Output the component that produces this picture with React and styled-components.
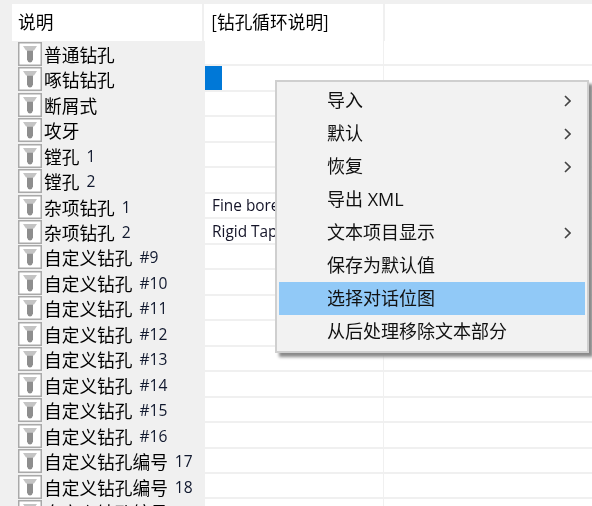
import React from 'react';
import styled, { createGlobalStyle } from 'styled-components';

const GlobalStyle = createGlobalStyle`
  html, body {
    margin: 0;
    padding: 0;
    width: 592px;
    height: 506px;
    overflow: hidden;
    background: #f0f0f0;
  }
`;

/* Table */
const Page = styled.div`
  position: relative;
  width: 592px;
  height: 506px;
  overflow: hidden;
  box-sizing: border-box;
  padding: 4px 0 0 12px;
  background: #f0f0f0;
  color: #000;
  font-family: 'Noto Sans CJK SC', 'Noto Sans', sans-serif;
  font-size: 17.7px;
  filter: blur(0.3px);
`;

const Grid = styled.div`
  display: grid;
  grid-template-columns: 193px 178px 1fr;
  background: #fff;
`;

const HeaderCell = styled.div`
  height: 37px;
  box-sizing: border-box;
  display: flex;
  align-items: center;
  padding-left: ${p => p.$pad}px;
  padding-bottom: 3px;
  margin-left: ${p => p.$shift || 0}px;
  background: #fff;
  border-left: ${p => (p.$divider ? '2px solid #f0f0f0' : 'none')};
  white-space: nowrap;
  overflow: hidden;
`;

const NameCell = styled.div`
  height: 25.47px;
  box-sizing: border-box;
  display: flex;
  align-items: center;
  padding-left: 6px;
  gap: 2px;
  background: #f0f0f0;
  white-space: nowrap;
`;

const ValueCell = styled.div`
  height: 25.47px;
  box-sizing: border-box;
  display: flex;
  align-items: center;
  padding-left: 7px;
  background: #fff;
  border-bottom: 2px solid #f0f0f0;
  border-left: ${p => (p.$divider ? '1px solid #f0f0f0' : 'none')};
  font-size: 15.4px;
  font-family: 'Open Sans', 'Noto Sans', sans-serif;
  color: #141428;
  white-space: nowrap;
  overflow: hidden;
`;

const SelectMark = styled.div`
  width: 17px;
  height: 24px;
  margin-left: -7px;
  background: #0078d7;
`;

const IconBox = styled.svg`
  flex: none;
  width: 24px;
  height: 24px;
`;

const Num = styled.span`
  font-family: 'Open Sans', 'Noto Sans', sans-serif;
  font-size: 15.6px;
  margin-left: 5px;
  color: #10182e;
`;

/* Context menu */
const Menu = styled.div`
  position: absolute;
  left: 275px;
  top: 80px;
  width: 314px;
  height: 273px;
  box-sizing: border-box;
  padding: 2px;
  background: #f2f2f2;
  border: 2px solid #cfcfcf;
  box-shadow: 4px 4px 3px #8a8a8a;
  color: #111;
  font-family: 'Open Sans', 'Noto Sans CJK SC', sans-serif;
  font-size: 18px;
`;

const MenuItem = styled.div`
  height: 33px;
  box-sizing: border-box;
  display: flex;
  align-items: center;
  justify-content: space-between;
  padding: 0 14px 0 48px;
  background: ${p => (p.$active ? '#91c9f7' : 'transparent')};
  white-space: nowrap;
`;

const MenuLabel = styled.span`
  padding-bottom: 3px;
`;

const Arrow = styled.svg`
  width: 7px;
  height: 12px;
`;

const DrillIcon = () => (
  <IconBox viewBox="0 0 24 24">
    <rect x="0.75" y="0.75" width="22.5" height="22.5" fill="#fff" stroke="#a9a9a9" strokeWidth="1.5" />
    <path d="M5 4h14l-3 4.500H8z" fill="#c4c4c4" />
    <path d="M9 8.500h6v9q-0.500 2.500-3 3q-2.500-0.500-3-3z" fill="#8e8e8e" />
  </IconBox>
);

const SubArrow = () => (
  <Arrow viewBox="0 0 7 12">
    <path d="M1 1l5 5l-5 5" fill="none" stroke="#444" strokeWidth="1.600" />
  </Arrow>
);

const rows = [
  ['普通钻孔'],
  ['啄钻钻孔'],
  ['断屑式'],
  ['攻牙'],
  ['镗孔', '1'],
  ['镗孔', '2'],
  ['杂项钻孔', '1'],
  ['杂项钻孔', '2'],
  ['自定义钻孔', '#9'],
  ['自定义钻孔', '#10'],
  ['自定义钻孔', '#11'],
  ['自定义钻孔', '#12'],
  ['自定义钻孔', '#13'],
  ['自定义钻孔', '#14'],
  ['自定义钻孔', '#15'],
  ['自定义钻孔', '#16'],
  ['自定义钻孔编号', '17'],
  ['自定义钻孔编号', '18'],
  ['自定义钻孔编号', '19']
];

const values = { 6: 'Fine bore', 7: 'Rigid Tap' };

const menuItems = [
  { label: '导入', sub: true },
  { label: '默认', sub: true },
  { label: '恢复', sub: true },
  { label: '导出 XML' },
  { label: '文本项目显示', sub: true },
  { label: '保存为默认值' },
  { label: '选择对话位图', active: true },
  { label: '从后处理移除文本部分' }
];

const App = () => (
  <Page>
    <GlobalStyle />
    <Grid>
      <HeaderCell $pad={6}>说明</HeaderCell>
      <HeaderCell $pad={7} $shift={-3} $divider>[钻孔循环说明]</HeaderCell>
      <HeaderCell $divider />
      {rows.map(([name, num], i) => (
        <React.Fragment key={i}>
          <NameCell>
            <DrillIcon />
            <span>{name}</span>
            {num && <Num>{num}</Num>}
          </NameCell>
          <ValueCell>
            {i === 1 && <SelectMark />}
            {values[i]}
          </ValueCell>
          <ValueCell $divider />
        </React.Fragment>
      ))}
    </Grid>
    <Menu>
      {menuItems.map(item => (
        <MenuItem key={item.label} $active={item.active}>
          <MenuLabel>{item.label}</MenuLabel>
          {item.sub && <SubArrow />}
        </MenuItem>
      ))}
    </Menu>
  </Page>
);

export default App;
